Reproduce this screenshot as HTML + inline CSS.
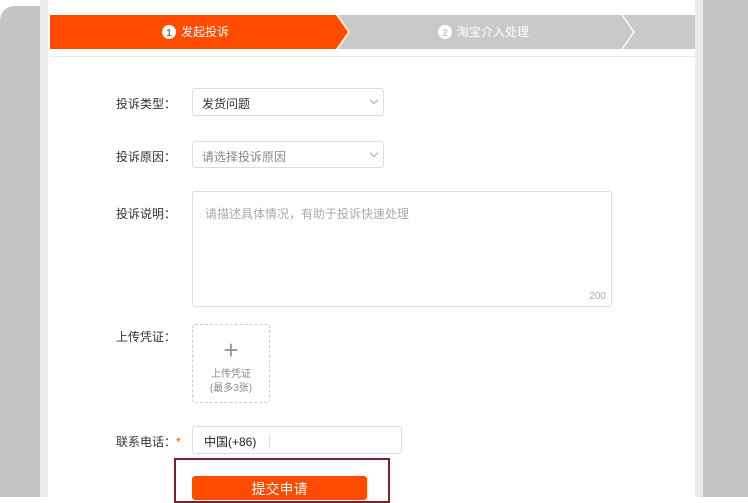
<!DOCTYPE html>
<html><head><meta charset="utf-8"><style>
body{margin:0;width:748px;height:497px;overflow:hidden;background:#fff;font-family:"Liberation Sans","Noto Sans CJK SC",sans-serif;position:relative}
.a{position:absolute}
.lbl{font-size:12px;color:#333}
.box{border:1px solid #dcdcdc;border-radius:3px;background:#fff;box-sizing:border-box}
.ar{position:absolute;right:6px;top:8px;width:5px;height:5px;border-right:1px solid #aaa;border-bottom:1px solid #aaa;transform:rotate(45deg)}
</style></head><body>
<div class="a" style="left:0;top:6px;width:40px;height:491px;background:#c4c4c4;border-radius:14px 0 0 0"></div>
<div class="a" style="left:40px;top:0;width:8px;height:497px;background:#ececec"></div>
<div class="a" style="left:695px;top:0;width:8px;height:497px;background:#ececec"></div>
<div class="a" style="left:703px;top:0;width:45px;height:497px;background:#c4c4c4"></div>
<svg class="a" style="left:50px;top:15px" width="645" height="34">
<rect x="0" y="0" width="645" height="34" fill="#c9c9c9"/>
<polygon points="0,0 286,0 298,17 286,34 0,34" fill="#ff4a00"/>
<polyline points="287,0 299,17 287,34" fill="none" stroke="#fff" stroke-width="1.5"/>
<polyline points="572,0 584,17 572,34" fill="none" stroke="#fff" stroke-width="1.5"/>
<circle cx="119" cy="17" r="7" fill="#fff"/><text x="119" y="21" font-size="10" text-anchor="middle" fill="#ff4a00" font-weight="bold" font-family="Liberation Sans">1</text>
<text x="131" y="21" font-size="12" fill="#fff" font-family="Liberation Sans,Noto Sans CJK SC,sans-serif">发起投诉</text>
<circle cx="395" cy="17" r="7" fill="#fff"/><text x="395" y="21" font-size="10" text-anchor="middle" fill="#c9c9c9" font-weight="bold" font-family="Liberation Sans">2</text>
<text x="407" y="21" font-size="12" fill="#fff" font-family="Liberation Sans,Noto Sans CJK SC,sans-serif">淘宝介入处理</text>
</svg>
<div class="a" style="left:50px;top:56px;width:645px;height:1px;background:#e8e8e8"></div>
<div class="a lbl" style="left:116px;top:95px">投诉类型：</div>
<div class="a box" style="left:192px;top:88px;width:192px;height:28px"><span class="a lbl" style="left:9px;top:6px">发货问题</span><i class="ar"></i></div>
<div class="a lbl" style="left:116px;top:148px">投诉原因：</div>
<div class="a box" style="left:192px;top:141px;width:192px;height:27px"><span class="a" style="left:9px;top:6px;font-size:12px;color:#888">请选择投诉原因</span><i class="ar"></i></div>
<div class="a lbl" style="left:116px;top:205px">投诉说明：</div>
<div class="a box" style="left:192px;top:191px;width:420px;height:116px"><span class="a" style="left:12px;top:13px;font-size:12px;color:#aaa">请描述具体情况，有助于投诉快速处理</span><span class="a" style="right:5px;bottom:4px;font-size:10px;color:#aaa">200</span></div>
<div class="a lbl" style="left:116px;top:328px">上传凭证：</div>
<div class="a" style="left:192px;top:324px;width:78px;height:79px;border:1px dashed #ccc;border-radius:3px;box-sizing:border-box;text-align:center;color:#888;font-size:10px;line-height:14px">
<div style="font-size:26px;line-height:26px;margin-top:12px;color:#999;font-weight:200">+</div>
<div style="margin-top:5px">上传凭证</div><div>(最多3张)</div></div>
<div class="a lbl" style="left:116px;top:433px">联系电话：<span style="color:#f40">*</span></div>
<div class="a box" style="left:192px;top:426px;width:210px;height:28px"><span class="a lbl" style="left:11px;top:6px;color:#222">中国(+86)</span><span class="a" style="left:76px;top:7px;width:1px;height:13px;background:#ddd"></span></div>
<div class="a" style="left:174px;top:458px;width:216px;height:45px;border:2px solid #7a1f2c;box-sizing:border-box"></div>
<div class="a" style="left:192px;top:476px;width:175px;height:24px;background:#ff4a00;border-radius:3px;color:#fff;font-size:14px;text-align:center;line-height:26px">提交申请</div>
</body></html>
